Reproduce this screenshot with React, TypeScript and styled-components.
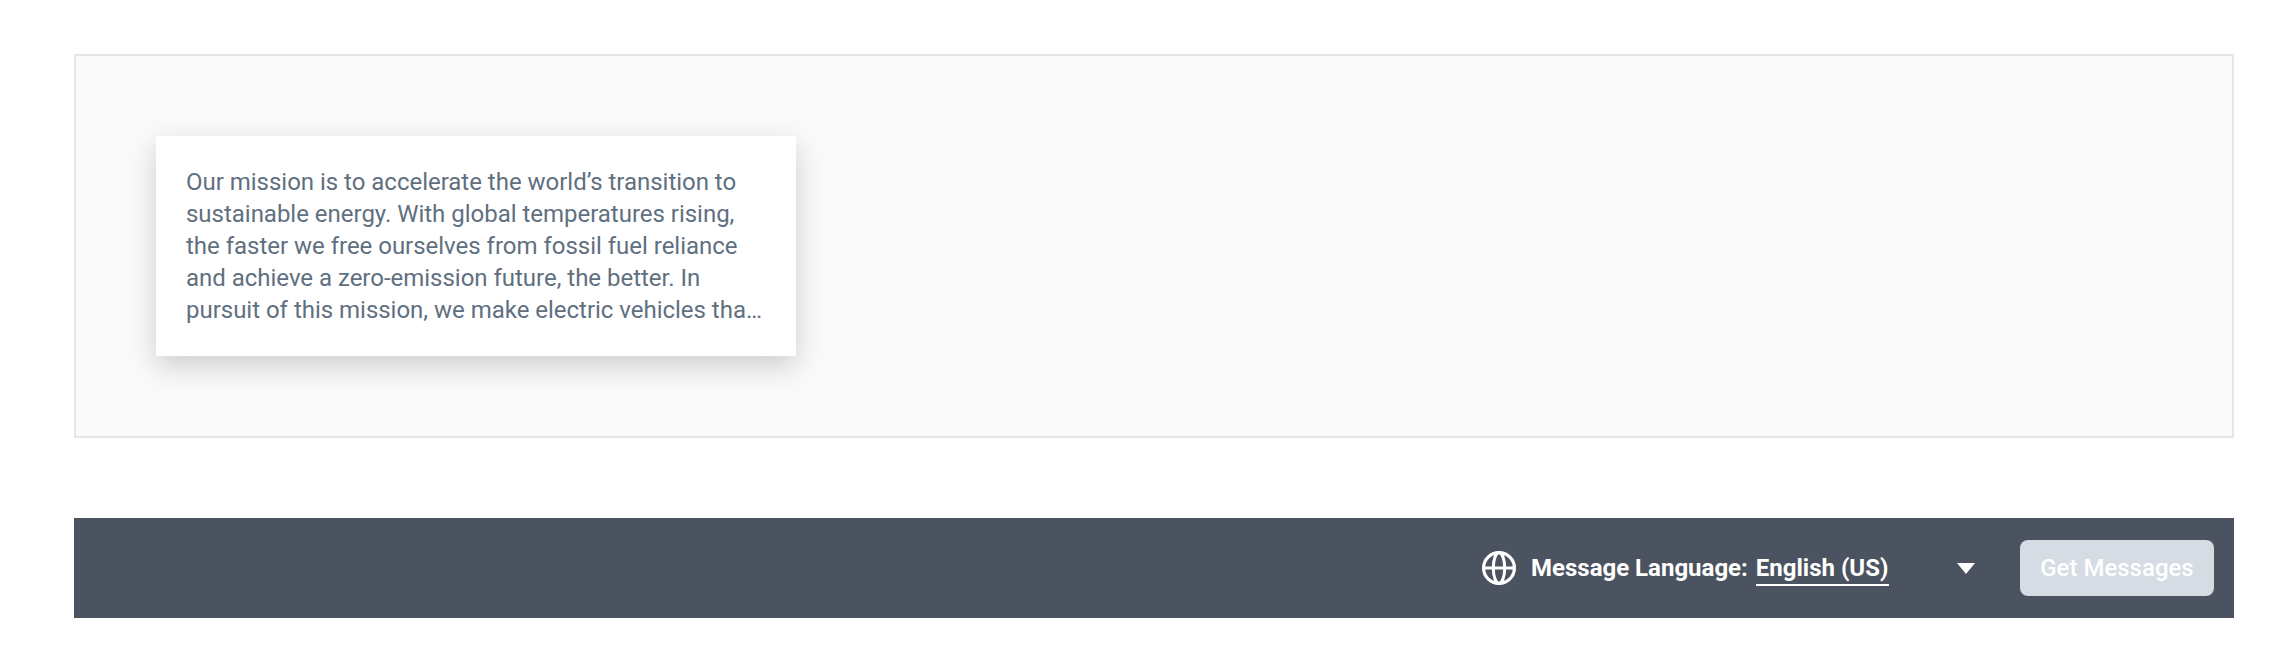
import React from "react";
import styled, { createGlobalStyle } from "styled-components";

const GlobalStyle = createGlobalStyle`
  *, *::before, *::after { box-sizing: border-box; }
  body {
    margin: 0;
    background: #ffffff;
    font-family: Roboto, "Liberation Sans", sans-serif;
  }
`;

const Page = styled.main`
  display: flex;
  flex-direction: column;
  gap: 80px;
  width: 2286px;
  height: 652px;
  padding: 54px 52px 34px 74px;
`;

const Preview = styled.section`
  height: 384px;
  padding: 80px;
  border: 2px solid #e1e7eb;
  background: #fafafa;
`;

const MessageCard = styled.article`
  width: 640px;
  height: 220px;
  padding: 30px;
  background: #ffffff;
  box-shadow: 0 10px 28px rgba(0, 0, 0, 0.18);
`;

const MessageText = styled.p`
  margin: 0;
  color: #607080;
  font-size: 24px;
  line-height: 32px;
  letter-spacing: -0.018px;
`;

const Toolbar = styled.footer`
  display: flex;
  align-items: center;
  justify-content: flex-end;
  height: 100px;
  padding-right: 20px;
  background: #4c5360;
`;

const LanguageField = styled.div`
  display: flex;
  align-items: center;
  width: 493px;
  margin-right: 45px;
  color: #ffffff;
  font-size: 24px;
  font-weight: 700;
  line-height: 32px;
`;

const FieldLabel = styled.span`
  margin: 0 8px 0 15px;
  white-space: nowrap;
`;

const LanguageValue = styled.span`
  height: 36px;
  min-width: 133px;
  padding-top: 2px;
  border-bottom: 2px solid #ffffff;
  white-space: nowrap;
`;

const CaretIcon = styled.svg`
  display: block;
  margin-left: auto;
`;

const PrimaryButton = styled.button`
  width: 194px;
  height: 56px;
  padding: 0;
  border: 0;
  border-radius: 8px;
  background: #d6dce4;
  color: #ffffff;
  font: 500 24px/32px Roboto, "Liberation Sans", sans-serif;
  white-space: nowrap;
`;

const GlobeIcon = () => (
  <svg width="34" height="34" viewBox="0 0 34 34" fill="none" stroke="#fff">
    <circle cx="17" cy="17" r="15.4" strokeWidth="3.2" />
    <ellipse cx="17" cy="17" rx="5.7" ry="15.4" strokeWidth="3" />
    <path d="M2 17h30" strokeWidth="3" />
  </svg>
);

export default function App() {
  return (
    <>
      <GlobalStyle />
      <Page>
        <Preview>
          <MessageCard>
            <MessageText>
              Our mission is to accelerate the world’s transition to sustainable
              energy. With global temperatures rising, the faster we free
              ourselves from fossil fuel reliance and achieve a zero-emission
              future, the better. In pursuit of this mission, we make electric
              vehicles tha…
            </MessageText>
          </MessageCard>
        </Preview>
        <Toolbar>
          <LanguageField>
            <GlobeIcon />
            <FieldLabel>Message Language:</FieldLabel>
            <LanguageValue>English (US)</LanguageValue>
            <CaretIcon width="18" height="11" viewBox="0 0 18 11">
              <path d="M0 0h18L9 11z" fill="#fff" />
            </CaretIcon>
          </LanguageField>
          <PrimaryButton>Get Messages</PrimaryButton>
        </Toolbar>
      </Page>
    </>
  );
}
